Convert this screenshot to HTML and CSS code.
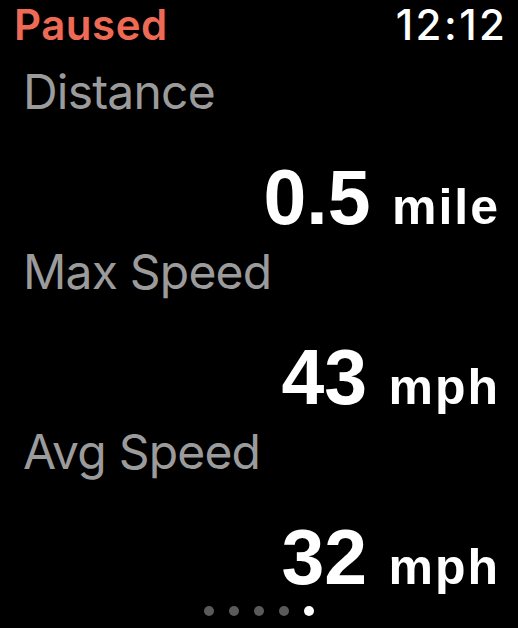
FILE: index.html
```html
<!DOCTYPE html>
<html lang="en">
<head>
    <meta charset="UTF-8">
    <meta name="viewport" content="width=device-width, initial-scale=1.0">
    <title>Workout Paused</title>
    <link rel="stylesheet" href="styles.css">
</head>
<body>
    <div class="watch">
        <!-- Status bar -->
        <div class="status-bar">
            <span class="status">Paused</span>
            <span class="clock">12:12</span>
        </div>

        <!-- Metrics -->
        <div class="metrics">
            <div class="metric">
                <div class="metric-label">Distance</div>
                <div class="metric-value">0.5 <span class="unit">mile</span></div>
            </div>
            <div class="metric">
                <div class="metric-label">Max Speed</div>
                <div class="metric-value">43 <span class="unit">mph</span></div>
            </div>
            <div class="metric">
                <div class="metric-label">Avg Speed</div>
                <div class="metric-value">32 <span class="unit">mph</span></div>
            </div>
        </div>

        <!-- Page dots -->
        <div class="page-dots">
            <span class="dot"></span>
            <span class="dot"></span>
            <span class="dot"></span>
            <span class="dot"></span>
            <span class="dot active"></span>
        </div>
    </div>
</body>
</html>
```

FILE: styles.css
```css
body {
    margin: 0;
    background: #000;
    color: white;
    font-family: Inter, "Liberation Sans", sans-serif;
}

.watch {
    width: 518px;
    height: 628px;
    overflow: hidden;
}

.status-bar {
    display: flex;
    justify-content: space-between;
    align-items: baseline;
    padding: 0 13px 0 14px;
    height: 50px;
    line-height: 50px;
    font-size: 42px;
}

.status {
    color: #ef6a55;
    font-weight: 600;
    letter-spacing: 0.5px;
}

.clock {
    font-weight: 500;
    letter-spacing: 2.5px;
    margin-right: -2.5px;
}

.metrics {
    display: flex;
    flex-direction: column;
    gap: 6px;
    margin-top: 13px;
}

.metric-label {
    padding-left: 23px;
    font-size: 48px;
    line-height: 58px;
    letter-spacing: -0.8px;
    color: #9b9b9b;
}

.metric-value {
    margin-top: 36px;
    padding-right: 20px;
    text-align: right;
    font-family: "Liberation Sans", sans-serif;
    font-size: 77px;
    line-height: 80px;
    font-weight: 700;
}

.unit {
    font-size: 50px;
    line-height: 1;
    letter-spacing: 2px;
    margin-right: -2px;
}

.page-dots {
    display: flex;
    justify-content: center;
    gap: 15px;
    margin-top: 9px;
}

.dot {
    width: 10px;
    height: 10px;
    border-radius: 50%;
    background: #5a5a5a;
}

.dot.active {
    background: #fff;
}
```
